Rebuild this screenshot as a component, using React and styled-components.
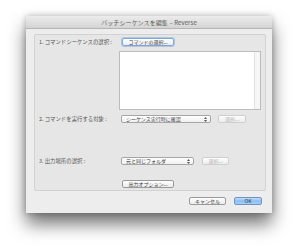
import React from "react";
import styled, { createGlobalStyle, css } from "styled-components";

const Global = createGlobalStyle`
  html, body { margin: 0; padding: 0; background: #ffffff; }
  body { width: 300px; height: 250px; overflow: hidden; font-family: "Noto Sans CJK JP", "Noto Sans", sans-serif; }
  #root { width: 300px; height: 250px; }
`;

const Stage = styled.div`
  width: 300px;
  height: 250px;
  padding: 16px 0 0 26px;
  box-sizing: border-box;
`;

const Window = styled.div`
  width: 246px;
  height: 197px;
  background: #ededed;
  box-shadow: 0 11px 18px rgba(0, 0, 0, 0.55), 0 0 6px rgba(0, 0, 0, 0.25);
  border-radius: 3px 3px 0 0;
  display: flex;
  flex-direction: column;
  box-sizing: border-box;
`;

const TitleBar = styled.div`
  height: 13px;
  background: linear-gradient(#ececec, #d4d4d4);
  border-bottom: 1px solid #b4b4b4;
  border-radius: 3px 3px 0 0;
  display: flex;
  align-items: center;
  justify-content: center;
  font-size: 6px;
  color: #5a5a5a;
  box-sizing: border-box;
  letter-spacing: 0.1px;
`;

const Body = styled.div`
  flex: 1;
  padding: 5px 6px 0 8px;
  display: flex;
  flex-direction: column;
`;

const Panel = styled.div`
  height: 157px;
  background: #e6e6e6;
  border: 1px solid #d2d2d2;
  border-radius: 2px;
  box-sizing: border-box;
  padding: 2px 4px 0 4px;
  display: flex;
  flex-direction: column;
`;

const Row = styled.div`
  display: flex;
  align-items: center;
  height: 8px;
  margin-top: ${(p) => p.$top || 0}px;
`;

const Label = styled.div`
  width: 80px;
  flex: none;
  font-size: 5.4px;
  color: #555;
  white-space: nowrap;
  line-height: 8px;
`;

const btnBase = css`
  height: 8px;
  box-sizing: border-box;
  border-radius: 2px;
  font-size: 5px;
  line-height: 6px;
  display: flex;
  align-items: center;
  justify-content: center;
  white-space: nowrap;
  font-family: inherit;
  padding: 0;
`;

const Button = styled.div`
  ${btnBase};
  width: ${(p) => p.$w}px;
  margin-left: ${(p) => p.$ml || 0}px;
  background: linear-gradient(#ffffff, #ececec);
  border: 1px solid ${(p) => (p.$focus ? "#7ea6d8" : p.$disabled ? "#cfcfcf" : "#9a9a9a")};
  color: ${(p) => (p.$disabled ? "#b4b4b4" : "#3a3a3a")};
  box-shadow: ${(p) => (p.$focus ? "0 0 0 1px rgba(120,160,215,0.45)" : "none")};
  ${(p) =>
    p.$primary &&
    css`
      background: linear-gradient(#c4def8, #8dbdf0 50%, #a9d0f6);
      border-color: #6d94c8;
      color: #2a3a50;
    `}
`;

const Select = styled.div`
  ${btnBase};
  width: ${(p) => p.$w}px;
  margin-left: 2px;
  justify-content: space-between;
  padding: 0 3px 0 4px;
  background: linear-gradient(#ffffff, #f0f0f0);
  border: 1px solid #a6a6a6;
  color: #3a3a3a;
`;

const Arrows = () => (
  <svg width="3" height="5" viewBox="0 0 3 5">
    <path d="M1.5 0 L3 2 L0 2 Z" fill="#555" />
    <path d="M1.5 5 L3 3 L0 3 Z" fill="#555" />
  </svg>
);

const ListRow = styled.div`
  display: flex;
  margin-top: 5px;
`;

const ListBox = styled.div`
  margin-left: 80px;
  width: 142px;
  height: 59px;
  background: #ffffff;
  border: 1px solid #bcbcbc;
  box-sizing: border-box;
  display: flex;
  justify-content: flex-end;
`;

const ScrollTrack = styled.div`
  width: 5px;
  background: #f6f6f6;
  border-left: 1px solid #e2e2e2;
`;

const Footer = styled.div`
  display: flex;
  justify-content: flex-end;
  gap: 8px;
  padding: 6px 4px 0 0;
`;

export default function App() {
  return (
    <>
      <Global />
      <Stage>
        <Window>
          <TitleBar>バッチシーケンスを編集 – Reverse</TitleBar>
          <Body>
            <Panel>
              <Row $top={1}>
                <Label>1. コマンドシーケンスの選択 :</Label>
                <Button $w={52} $ml={3} $focus>コマンドの選択...</Button>
              </Row>
              <ListRow>
                <ListBox>
                  <ScrollTrack />
                </ListBox>
              </ListRow>
              <Row $top={5}>
                <Label>2. コマンドを実行する対象 :</Label>
                <Select $w={90}>
                  <span>シーケンス実行時に確認</span>
                  <Arrows />
                </Select>
                <Button $w={28} $ml={7} $disabled>選択...</Button>
              </Row>
              <Row $top={34}>
                <Label>3. 出力場所の選択 :</Label>
                <Select $w={73}>
                  <span>元と同じフォルダ</span>
                  <Arrows />
                </Select>
                <Button $w={27} $ml={8} $disabled>選択...</Button>
              </Row>
              <Row $top={15}>
                <Label />
                <Button $w={52} $ml={3}>出力オプション...</Button>
              </Row>
            </Panel>
            <Footer>
              <Button $w={37}>キャンセル</Button>
              <Button $w={28} $primary>OK</Button>
            </Footer>
          </Body>
        </Window>
      </Stage>
    </>
  );
}
